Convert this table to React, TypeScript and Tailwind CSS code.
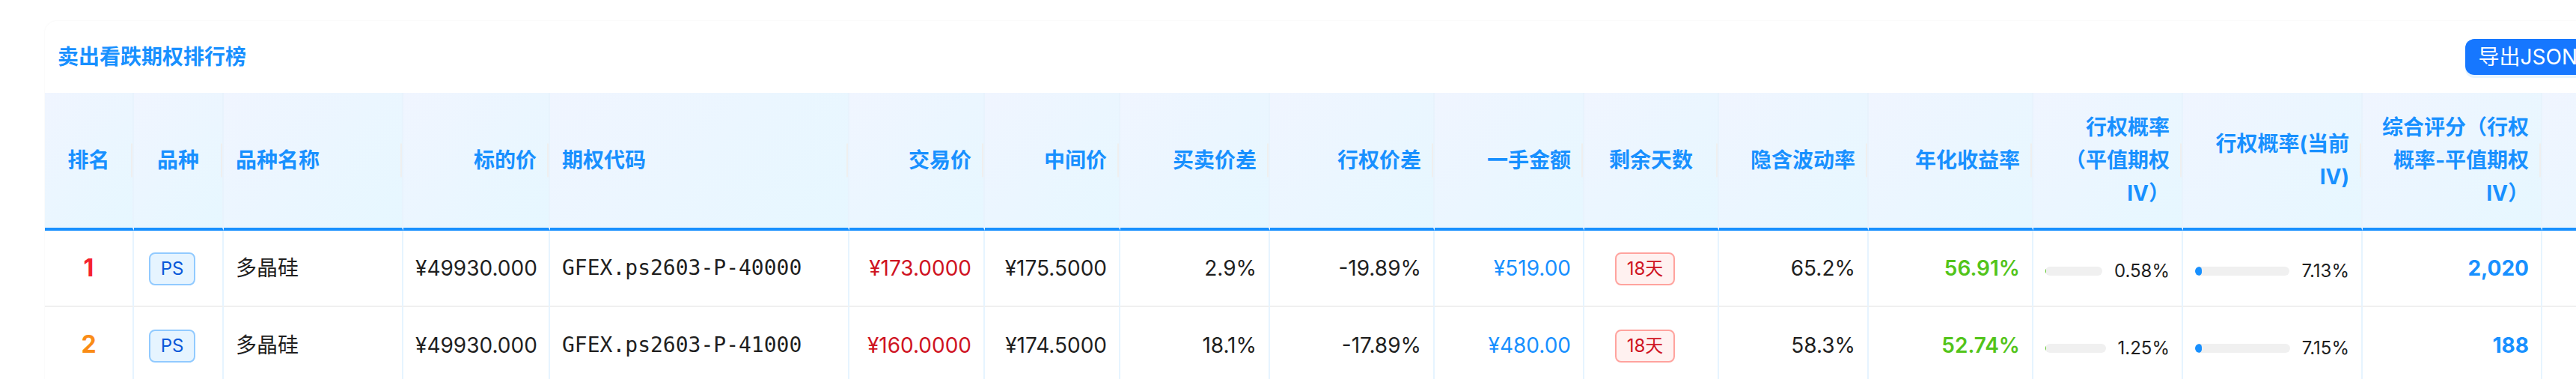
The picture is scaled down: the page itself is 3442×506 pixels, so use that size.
import React from "react";

type Align = "left" | "center" | "right";

const alignClass: Record<Align, string> = {
  left: "text-left",
  center: "text-center",
  right: "text-right",
};

const columns: { label: string; w: number; align: Align }[] = [
  { label: "排名", w: 119, align: "center" },
  { label: "品种", w: 120, align: "center" },
  { label: "品种名称", w: 240, align: "left" },
  { label: "标的价", w: 196, align: "right" },
  { label: "期权代码", w: 400, align: "left" },
  { label: "交易价", w: 181, align: "right" },
  { label: "中间价", w: 181, align: "right" },
  { label: "买卖价差", w: 200, align: "right" },
  { label: "行权价差", w: 220, align: "right" },
  { label: "一手金额", w: 200, align: "right" },
  { label: "剩余天数", w: 180, align: "center" },
  { label: "隐含波动率", w: 200, align: "right" },
  { label: "年化收益率", w: 220, align: "right" },
  { label: "行权概率（平值期权IV）", w: 200, align: "right" },
  { label: "行权概率(当前IV)", w: 240, align: "right" },
  { label: "综合评分（行权概率-平值期权IV）", w: 240, align: "right" },
  { label: "", w: 240, align: "right" },
];

type Row = {
  rank: number;
  rankColor: string;
  code: string;
  underlying: string;
  trade: string;
  mid: string;
  spread: string;
  strikeDiff: string;
  amount: string;
  days: string;
  iv: string;
  annual: string;
  probAtm: number;
  probCur: number;
  score: string;
};

const rows: Row[] = [
  {
    rank: 1,
    rankColor: "text-[#f5222d]",
    code: "GFEX.ps2603-P-40000",
    underlying: "¥49930.000",
    trade: "¥173.0000",
    mid: "¥175.5000",
    spread: "2.9%",
    strikeDiff: "-19.89%",
    amount: "¥519.00",
    days: "18天",
    iv: "65.2%",
    annual: "56.91%",
    probAtm: 0.58,
    probCur: 7.13,
    score: "2,020",
  },
  {
    rank: 2,
    rankColor: "text-[#fa8c16]",
    code: "GFEX.ps2603-P-41000",
    underlying: "¥49930.000",
    trade: "¥160.0000",
    mid: "¥174.5000",
    spread: "18.1%",
    strikeDiff: "-17.89%",
    amount: "¥480.00",
    days: "18天",
    iv: "58.3%",
    annual: "52.74%",
    probAtm: 1.25,
    probCur: 7.15,
    score: "188",
  },
];

function Progress({ pct, color }: { pct: number; color: string }) {
  return (
    <div className="flex h-[44px] items-center gap-4 pt-[8px]">
      <div className="h-[12px] flex-1 overflow-hidden rounded-full bg-[#f0f0f0]">
        <div className={`h-full rounded-full ${color}`} style={{ width: `${pct}%` }} />
      </div>
      <span className="shrink-0 text-[24px] leading-[36px] text-[#1f1f1f]">{pct.toFixed(2)}%</span>
    </div>
  );
}

const td =
  "border-b-2 border-r-2 border-b-[#f0f0f0] border-r-[#e6f4ff] px-4 py-[27px] align-middle text-[28px] leading-[44px] whitespace-nowrap";

export default function App() {
  const tableWidth = columns.reduce((s, c) => s + c.w, 0);
  return (
    <div
      className="h-[506px] w-full overflow-hidden bg-white text-[#1f1f1f]"
      style={{ fontFamily: 'Inter, "Noto Sans CJK SC", sans-serif' }}
    >
      <div className="w-[3600px] pl-[60px] pt-[28px]">
        <div className="w-[3420px] rounded-t-[16px] bg-white shadow-[0_0_3px_rgba(0,0,0,0.05)]">
          <div className="flex h-[96px] items-center justify-between pl-[17px] pr-[18px]">
            <h2 className="text-[28px] font-bold leading-[44px] text-[#1890ff]">卖出看跌期权排行榜</h2>
            <button className="h-[48px] rounded-[12px] bg-[#1677ff] px-[18px] text-[28px] leading-[48px] text-white shadow-[0_4px_0_rgba(5,145,255,0.1)]">
              导出JSON
            </button>
          </div>
          <table
            className="table-fixed border-separate border-spacing-0"
            style={{ width: tableWidth }}
          >
            <colgroup>
              {columns.map((c, i) => (
                <col key={i} style={{ width: c.w }} />
              ))}
            </colgroup>
            <thead>
              <tr>
                {columns.map((c, i) => (
                  <th
                    key={i}
                    className={`relative border-b-4 border-r-2 border-b-[#1890ff] border-r-[#e8f3fd] bg-[linear-gradient(135deg,#f0f5ff_0%,#e6f7ff_100%)] px-4 py-6 align-middle text-[28px] font-bold leading-[44px] text-[#1890ff] before:absolute before:right-0 before:top-1/2 before:h-[45px] before:w-[2px] before:-translate-y-1/2 before:bg-[#efefef] before:content-[''] ${alignClass[c.align]}`}
                  >
                    {c.label}
                  </th>
                ))}
              </tr>
            </thead>
            <tbody>
              {rows.map((r) => (
                <tr key={r.rank}>
                  <td className={`${td} text-center`}>
                    <span className={`text-[32px] font-bold ${r.rankColor}`}>{r.rank}</span>
                  </td>
                  <td className={`${td} text-center`}>
                    <span className="mr-4 inline-block rounded-[8px] border-2 border-[#91caff] bg-[#e6f4ff] px-[14px] align-middle text-[24px] leading-[40px] text-[#0958d9]">
                      PS
                    </span>
                  </td>
                  <td className={`${td} text-left`}>多晶硅</td>
                  <td className={`${td} text-right`}>{r.underlying}</td>
                  <td
                    className={`${td} text-left text-[26px]`}
                    style={{ fontFamily: '"DejaVu Sans Mono", monospace' }}
                  >
                    {r.code}
                  </td>
                  <td className={`${td} text-right text-[#cf1322]`}>{r.trade}</td>
                  <td className={`${td} text-right`}>{r.mid}</td>
                  <td className={`${td} text-right`}>{r.spread}</td>
                  <td className={`${td} text-right`}>{r.strikeDiff}</td>
                  <td className={`${td} text-right text-[#1890ff]`}>{r.amount}</td>
                  <td className={`${td} text-center`}>
                    <span className="mr-4 inline-block rounded-[8px] border-2 border-[#ffa39e] bg-[#fff1f0] px-[14px] align-middle text-[24px] leading-[40px] text-[#cf1322]">
                      {r.days}
                    </span>
                  </td>
                  <td className={`${td} text-right`}>{r.iv}</td>
                  <td className={`${td} text-right font-semibold text-[#52c41a]`}>{r.annual}</td>
                  <td className={`${td}`}>
                    <Progress pct={r.probAtm} color="bg-[#52c41a]" />
                  </td>
                  <td className={`${td}`}>
                    <Progress pct={r.probCur} color="bg-[#1890ff]" />
                  </td>
                  <td className={`${td} text-right font-bold text-[#1890ff]`}>{r.score}</td>
                  <td className={`${td} text-right`}></td>
                </tr>
              ))}
            </tbody>
          </table>
        </div>
      </div>
    </div>
  );
}
